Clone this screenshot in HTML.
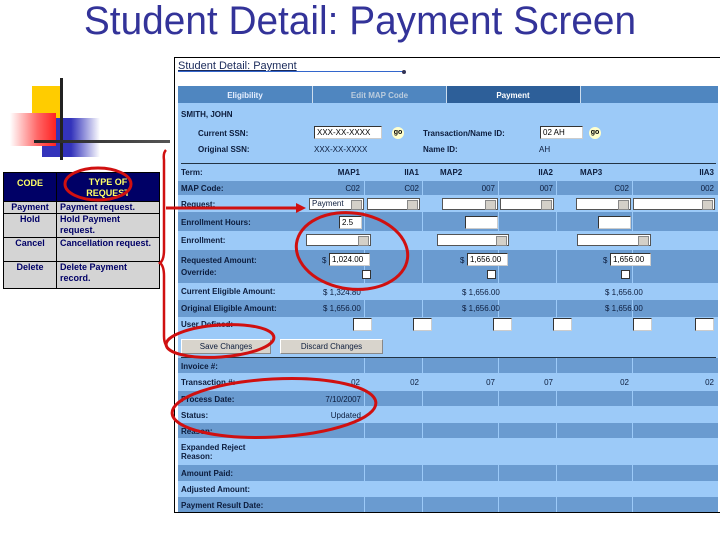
<!DOCTYPE html>
<html><head><meta charset="utf-8"><style>
*{margin:0;padding:0;box-sizing:border-box}
body{width:720px;height:540px;background:#fff;position:relative;overflow:hidden;font-family:"Liberation Sans",sans-serif}
.a{position:absolute}
.t{font-size:8px;font-weight:bold;color:#0c1c3c;white-space:nowrap}
.n{font-size:8px;color:#0c1c3c;white-space:nowrap}
.dk{background:#6a9bd0}
.inp{position:absolute;background:#fff;border:1px solid #333;border-right-color:#ccc;border-bottom-color:#ccc;font-size:8px;color:#000;padding-left:2px;line-height:11px}
.sel{position:absolute;background:#fff;border:1px solid #555;height:12px}
.sel:after{content:"";position:absolute;right:1px;top:1px;width:9px;height:8px;background:#d4d0c8;border:1px solid #888}
.cb{position:absolute;width:9px;height:9px;background:#fff;border:1px solid #333}
.lt td{padding:0 3px;vertical-align:top;border:1px solid #000;line-height:11px}
</style></head><body>
<div class="a" style="left:0;top:0;width:720px;text-align:center;font-size:40px;color:#333399;line-height:42px;transform:scaleX(0.97)">Student Detail: Payment Screen</div>

<!-- decorative -->
<div class="a" style="left:32px;top:86px;width:30px;height:32px;background:#ffcc00"></div>
<div class="a" style="left:42px;top:118px;width:58px;height:39px;background:linear-gradient(90deg,#3333bb 50%,#fff)"></div>
<div class="a" style="left:10px;top:113px;width:46px;height:33px;background:linear-gradient(90deg,#fff,#ff6666 60%,#ff2222)"></div>
<div class="a" style="left:60px;top:78px;width:3px;height:82px;background:#222"></div>
<div class="a" style="left:34px;top:140px;width:136px;height:3px;background:linear-gradient(90deg,#222,#555)"></div>

<!-- left table -->
<table class="a lt" style="left:3px;top:172px;width:157px;border-collapse:collapse;table-layout:fixed;font-size:9px;font-weight:bold;font-family:'Liberation Sans',sans-serif">
<colgroup><col style="width:53px"><col></colgroup>
<tr style="background:#000066;color:#ffff66;height:29px;text-align:center"><td style="padding-top:5px">CODE</td><td style="padding-top:4px">TYPE OF<br>REQUEST</td></tr>
<tr style="background:#d4d4d4;color:#000066;height:12px"><td style="text-align:center">Payment</td><td>Payment request.</td></tr>
<tr style="background:#d4d4d4;color:#000066;height:24px"><td style="text-align:center">Hold</td><td>Hold Payment request.</td></tr>
<tr style="background:#d4d4d4;color:#000066;height:24px"><td style="text-align:center">Cancel</td><td>Cancellation request.</td></tr>
<tr style="background:#d4d4d4;color:#000066;height:27px"><td style="text-align:center">Delete</td><td>Delete Payment record.</td></tr>
</table>

<!-- screenshot frame -->
<div class="a" style="left:174px;top:57px;width:546px;height:456px;border:1px solid #000;border-right:none;background:#fff"></div>
<div class="a" style="left:178px;top:60px;font-size:11px;color:#1a2a5a;text-decoration:underline">Student Detail: Payment</div>
<div class="a" style="left:178px;top:71px;width:226px;height:1px;background:#36c"></div>
<div class="a" style="left:402px;top:70px;width:4px;height:4px;border-radius:2px;background:#335"></div>

<!-- body -->
<div class="a" style="left:178px;top:86px;width:540px;height:426px;background:#9ccaf8"></div>
<div class="a" style="left:178px;top:86px;width:540px;height:17px;background:#4f86c0"></div>
<div class="a" style="left:446px;top:86px;width:134px;height:17px;background:#2d5f99"></div>
<div class="a" style="left:312px;top:86px;width:1px;height:17px;background:#cde"></div>
<div class="a" style="left:446px;top:86px;width:1px;height:17px;background:#cde"></div>
<div class="a" style="left:580px;top:86px;width:1px;height:17px;background:#cde"></div>
<div class="a t" style="left:178px;top:91px;width:134px;text-align:center;color:#e8f0ff">Eligibility</div>
<div class="a t" style="left:313px;top:91px;width:133px;text-align:center;color:#bcd">Edit MAP Code</div>
<div class="a t" style="left:446px;top:91px;width:134px;text-align:center;color:#fff">Payment</div>

<div class="a t" style="left:181px;top:110px">SMITH, JOHN</div>
<div class="a t" style="left:198px;top:129px">Current SSN:</div>
<div class="a t" style="left:198px;top:145px">Original SSN:</div>
<div class="inp" style="left:314px;top:126px;width:68px;height:13px">XXX-XX-XXXX</div>
<div class="a" style="left:392px;top:127px;width:12px;height:12px;border-radius:6px;background:#ffffcc;font-size:7px;font-weight:bold;text-align:center;line-height:12px">go</div>
<div class="a n" style="left:314px;top:145px">XXX-XX-XXXX</div>
<div class="a t" style="left:423px;top:129px">Transaction/Name ID:</div>
<div class="inp" style="left:540px;top:126px;width:43px;height:13px">02 AH</div>
<div class="a" style="left:589px;top:127px;width:12px;height:12px;border-radius:6px;background:#ffffcc;font-size:7px;font-weight:bold;text-align:center;line-height:12px">go</div>
<div class="a t" style="left:423px;top:145px">Name ID:</div>
<div class="a n" style="left:539px;top:145px">AH</div>
<div class="a" style="left:181px;top:163px;width:535px;height:1px;background:#234"></div>

<!-- dark rows -->
<div class="a dk" style="left:178px;top:181px;width:540px;height:14px"></div>
<div class="a dk" style="left:178px;top:212px;width:540px;height:19px"></div>
<div class="a dk" style="left:178px;top:250px;width:540px;height:33px"></div>
<div class="a dk" style="left:178px;top:300px;width:540px;height:17px"></div>
<div class="a dk" style="left:178px;top:358px;width:540px;height:15px"></div>
<div class="a dk" style="left:178px;top:391px;width:540px;height:15px"></div>
<div class="a dk" style="left:178px;top:423px;width:540px;height:15px"></div>
<div class="a dk" style="left:178px;top:465px;width:540px;height:16px"></div>
<div class="a dk" style="left:178px;top:497px;width:540px;height:15px"></div>
<svg class="a" style="left:0;top:0" width="720" height="540">
<g stroke="#9ccaf8" stroke-width="1">
<path d="M364.5 181v14M422.5 181v14M498.5 181v14M556.5 181v14M632.5 181v14"/>
<path d="M364.5 212v19M422.5 212v19M498.5 212v19M556.5 212v19M632.5 212v19"/>
<path d="M364.5 250v33M422.5 250v33M498.5 250v33M556.5 250v33M632.5 250v33"/>
<path d="M364.5 300v17M422.5 300v17M498.5 300v17M556.5 300v17M632.5 300v17"/>
<path d="M364.5 358v15M422.5 358v15M498.5 358v15M556.5 358v15M632.5 358v15"/>
<path d="M364.5 391v15M422.5 391v15M498.5 391v15M556.5 391v15M632.5 391v15"/>
<path d="M364.5 423v15M422.5 423v15M498.5 423v15M556.5 423v15M632.5 423v15"/>
<path d="M364.5 465v16M422.5 465v16M498.5 465v16M556.5 465v16M632.5 465v16"/>
<path d="M364.5 497v15M422.5 497v15M498.5 497v15M556.5 497v15M632.5 497v15"/>
</g></svg>

<div class="a t" style="left:181px;top:168px">Term:</div>
<div class="a t" style="left:181px;top:184px">MAP Code:</div>
<div class="a t" style="left:181px;top:200px">Request:</div>
<div class="a t" style="left:181px;top:218px">Enrollment Hours:</div>
<div class="a t" style="left:181px;top:236px">Enrollment:</div>
<div class="a t" style="left:181px;top:256px">Requested Amount:</div>
<div class="a t" style="left:181px;top:268px">Override:</div>
<div class="a t" style="left:181px;top:287px">Current Eligible Amount:</div>
<div class="a t" style="left:181px;top:304px">Original Eligible Amount:</div>
<div class="a t" style="left:181px;top:320px">User Defined:</div>
<div class="a t" style="left:181px;top:362px">Invoice #:</div>
<div class="a t" style="left:181px;top:378px">Transaction #:</div>
<div class="a t" style="left:181px;top:395px">Process Date:</div>
<div class="a t" style="left:181px;top:411px">Status:</div>
<div class="a t" style="left:181px;top:427px">Reason:</div>
<div class="a t" style="left:181px;top:443px">Expanded Reject<br>Reason:</div>
<div class="a t" style="left:181px;top:469px">Amount Paid:</div>
<div class="a t" style="left:181px;top:485px">Adjusted Amount:</div>
<div class="a t" style="left:181px;top:501px">Payment Result Date:</div>

<div class="a t" style="left:300px;top:168px;width:60px;text-align:right">MAP1</div>
<div class="a t" style="left:364px;top:168px;width:55px;text-align:right">IIA1</div>
<div class="a t" style="left:440px;top:168px">MAP2</div>
<div class="a t" style="left:500px;top:168px;width:53px;text-align:right">IIA2</div>
<div class="a t" style="left:580px;top:168px">MAP3</div>
<div class="a t" style="left:632px;top:168px;width:82px;text-align:right">IIA3</div>
<div class="a n" style="left:300px;top:184px;width:60px;text-align:right">C02</div>
<div class="a n" style="left:364px;top:184px;width:55px;text-align:right">C02</div>
<div class="a n" style="left:422px;top:184px;width:73px;text-align:right">007</div>
<div class="a n" style="left:498px;top:184px;width:55px;text-align:right">007</div>
<div class="a n" style="left:556px;top:184px;width:73px;text-align:right">C02</div>
<div class="a n" style="left:632px;top:184px;width:82px;text-align:right">002</div>

<div class="sel n" style="left:309px;top:198px;width:55px;padding-left:2px;line-height:10px">Payment</div>
<div class="sel" style="left:367px;top:198px;width:53px"></div>
<div class="sel" style="left:442px;top:198px;width:56px"></div>
<div class="sel" style="left:500px;top:198px;width:54px"></div>
<div class="sel" style="left:576px;top:198px;width:55px"></div>
<div class="sel" style="left:633px;top:198px;width:82px"></div>

<div class="inp" style="left:339px;top:216px;width:23px;height:13px">2.5</div>
<div class="inp" style="left:465px;top:216px;width:33px;height:13px"></div>
<div class="inp" style="left:598px;top:216px;width:33px;height:13px"></div>
<div class="sel" style="left:306px;top:234px;width:65px"></div>
<div class="sel" style="left:437px;top:234px;width:72px"></div>
<div class="sel" style="left:577px;top:234px;width:74px"></div>

<div class="a n" style="left:322px;top:256px">$</div><div class="inp" style="left:329px;top:253px;width:41px;height:13px">1,024.00</div>
<div class="a n" style="left:460px;top:256px">$</div><div class="inp" style="left:467px;top:253px;width:41px;height:13px">1,656.00</div>
<div class="a n" style="left:603px;top:256px">$</div><div class="inp" style="left:610px;top:253px;width:41px;height:13px">1,656.00</div>
<div class="cb" style="left:362px;top:270px"></div>
<div class="cb" style="left:487px;top:270px"></div>
<div class="cb" style="left:621px;top:270px"></div>

<div class="a n" style="left:323px;top:288px">$ 1,324.80</div>
<div class="a n" style="left:462px;top:288px">$ 1,656.00</div>
<div class="a n" style="left:605px;top:288px">$ 1,656.00</div>
<div class="a n" style="left:323px;top:304px">$ 1,656.00</div>
<div class="a n" style="left:462px;top:304px">$ 1,656.00</div>
<div class="a n" style="left:605px;top:304px">$ 1,656.00</div>

<div class="inp" style="left:353px;top:318px;width:19px;height:13px"></div>
<div class="inp" style="left:413px;top:318px;width:19px;height:13px"></div>
<div class="inp" style="left:493px;top:318px;width:19px;height:13px"></div>
<div class="inp" style="left:553px;top:318px;width:19px;height:13px"></div>
<div class="inp" style="left:633px;top:318px;width:19px;height:13px"></div>
<div class="inp" style="left:695px;top:318px;width:19px;height:13px"></div>

<div class="a n" style="left:181px;top:339px;width:90px;height:15px;background:#d8d4cc;border:1px solid #888;border-top-color:#fff;border-left-color:#fff;text-align:center;line-height:13px">Save Changes</div>
<div class="a n" style="left:280px;top:339px;width:103px;height:15px;background:#d8d4cc;border:1px solid #888;border-top-color:#fff;border-left-color:#fff;text-align:center;line-height:13px">Discard Changes</div>
<div class="a" style="left:181px;top:357px;width:535px;height:1px;background:#234"></div>

<div class="a n" style="left:300px;top:378px;width:60px;text-align:right">02</div>
<div class="a n" style="left:364px;top:378px;width:55px;text-align:right">02</div>
<div class="a n" style="left:422px;top:378px;width:73px;text-align:right">07</div>
<div class="a n" style="left:498px;top:378px;width:55px;text-align:right">07</div>
<div class="a n" style="left:556px;top:378px;width:73px;text-align:right">02</div>
<div class="a n" style="left:632px;top:378px;width:82px;text-align:right">02</div>
<div class="a n" style="left:300px;top:395px;width:61px;text-align:right">7/10/2007</div>
<div class="a n" style="left:300px;top:411px;width:61px;text-align:right">Updated</div>

<svg class="a" style="left:0;top:0" width="720" height="540">
<g fill="none" stroke="#d01010" stroke-width="3">
<ellipse cx="98" cy="184" rx="33" ry="16"/>
<ellipse cx="352" cy="251" rx="56" ry="38" transform="rotate(8 352 251)"/>
<ellipse cx="220" cy="341" rx="54" ry="16" transform="rotate(-4 220 341)"/>
<ellipse cx="274" cy="408" rx="102" ry="29" transform="rotate(-3 274 408)"/>
<path d="M166 150 q-3 3 -2 10 v90 q0 10 -4 13 q4 3 4 13 v60 q0 6 2 9" stroke-width="2.5"/>
</g>
<path d="M166 208 L298 208" stroke="#d01010" stroke-width="3"/>
<path d="M296 203 L306 208 L296 213 Z" fill="#d01010"/>
</svg>
</body></html>
